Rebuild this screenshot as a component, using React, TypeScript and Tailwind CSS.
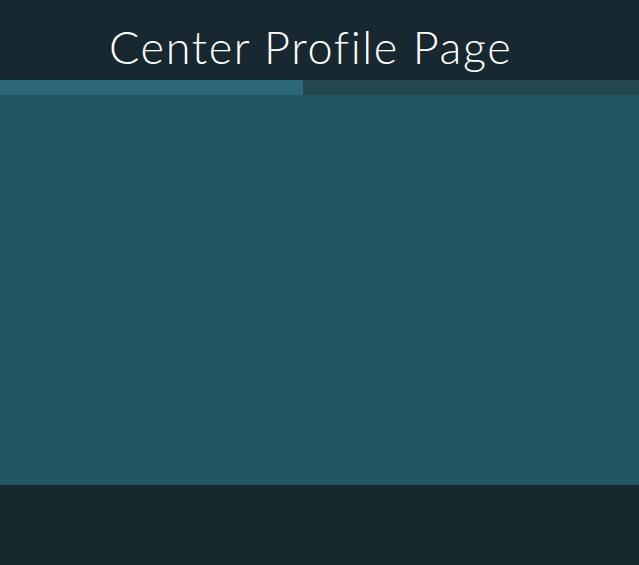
export default function App() {
  return (
    <div className="flex h-[565px] w-[639px] flex-col bg-[#182830]">
      {/* Header */}
      <header className="flex h-[80px] shrink-0 items-center bg-[#182830] pl-[109px] pt-[14px]">
        <h1
          className="text-[45px] font-light leading-none tracking-[1.6px] text-white"
          style={{ fontFamily: '"Lato", "Open Sans", sans-serif' }}
        >
          Center Profile Page
        </h1>
      </header>

      {/* Progress bar */}
      <div className="flex h-[15px] shrink-0 bg-[#24464f]">
        <div className="w-[303px] bg-[#2b6878]" />
      </div>

      {/* Content */}
      <main className="h-[390px] shrink-0 bg-[#215764]" />

      {/* Footer */}
      <footer className="flex-1 bg-[#18282f]" />
    </div>
  )
}
